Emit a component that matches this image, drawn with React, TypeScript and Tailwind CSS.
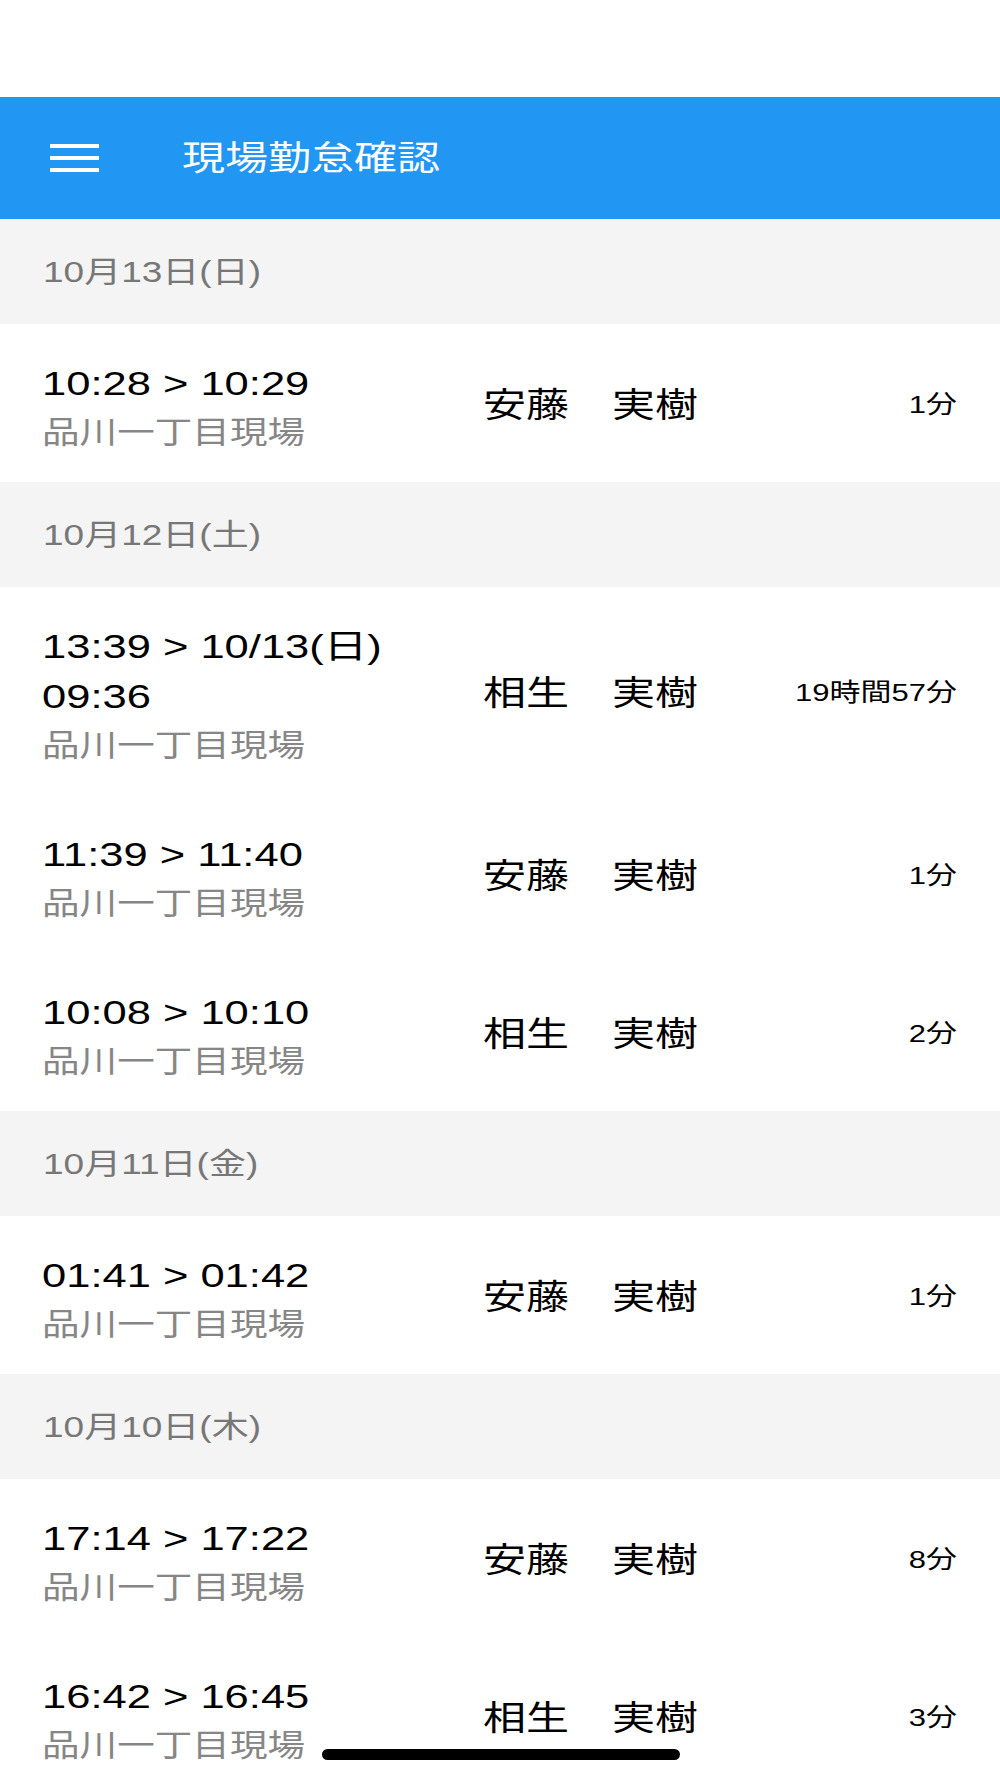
import React from "react";

type Entry = { lines: string[]; place: string; name: string; dur: string };
type Group = { date: string; entries: Entry[] };

const groups: Group[] = [
  {
    date: "10月13日(日)",
    entries: [{ lines: ["10:28 > 10:29"], place: "品川一丁目現場", name: "安藤　実樹", dur: "1分" }],
  },
  {
    date: "10月12日(土)",
    entries: [
      { lines: ["13:39 > 10/13(日)", "09:36"], place: "品川一丁目現場", name: "相生　実樹", dur: "19時間57分" },
      { lines: ["11:39 > 11:40"], place: "品川一丁目現場", name: "安藤　実樹", dur: "1分" },
      { lines: ["10:08 > 10:10"], place: "品川一丁目現場", name: "相生　実樹", dur: "2分" },
    ],
  },
  {
    date: "10月11日(金)",
    entries: [{ lines: ["01:41 > 01:42"], place: "品川一丁目現場", name: "安藤　実樹", dur: "1分" }],
  },
  {
    date: "10月10日(木)",
    entries: [
      { lines: ["17:14 > 17:22"], place: "品川一丁目現場", name: "安藤　実樹", dur: "8分" },
      { lines: ["16:42 > 16:45"], place: "品川一丁目現場", name: "相生　実樹", dur: "3分" },
    ],
  },
];

function Row({ e }: { e: Entry }) {
  return (
    <div className="flex items-center bg-white pl-[42px] pr-[43px] pt-[35px] pb-[26px]">
      <div className="w-[441px] shrink-0">
        {e.lines.map((l, i) => (
          <div key={i} className="h-[50px] text-[43.5px] leading-[50px] text-black whitespace-nowrap scale-y-[0.76]">
            {l}
          </div>
        ))}
        <div className="h-[47px] text-[37.6px] leading-[47px] text-[#868686] whitespace-nowrap scale-y-[0.82]">
          {e.place}
        </div>
      </div>
      <div className="mb-[6px] flex-1 text-[43px] leading-[50px] text-black whitespace-nowrap scale-y-[0.8]">{e.name}</div>
      <div className="mb-[6px] text-[31px] leading-[40px] text-black whitespace-nowrap text-right scale-y-[0.8]">{e.dur}</div>
    </div>
  );
}

export default function App() {
  return (
    <div className="relative h-[1778px] w-full overflow-hidden bg-white font-['Liberation_Sans','Noto_Sans_CJK_JP',sans-serif]">
      <div className="h-[97px] bg-white" />
      <div className="flex h-[122px] items-center bg-[#2196f3] pl-[50px]">
        <div className="flex flex-col gap-[8px]">
          <div className="h-[4px] w-[49px] bg-white" />
          <div className="h-[4px] w-[49px] bg-white" />
          <div className="h-[4px] w-[49px] bg-white" />
        </div>
        <div className="ml-[83px] text-[43px] leading-[50px] text-white scale-y-[0.8]">現場勤怠確認</div>
      </div>
      {groups.map((g) => (
        <div key={g.date}>
          <div className="flex h-[105px] items-center bg-[#f4f4f4] pl-[43px]">
            <div className="text-[37px] leading-[44px] text-[#777777] scale-y-[0.8]">{g.date}</div>
          </div>
          {g.entries.map((e, i) => (
            <Row key={i} e={e} />
          ))}
        </div>
      ))}
      <div className="absolute bottom-[18px] left-[322px] h-[11px] w-[358px] rounded-full bg-black" />
    </div>
  );
}
